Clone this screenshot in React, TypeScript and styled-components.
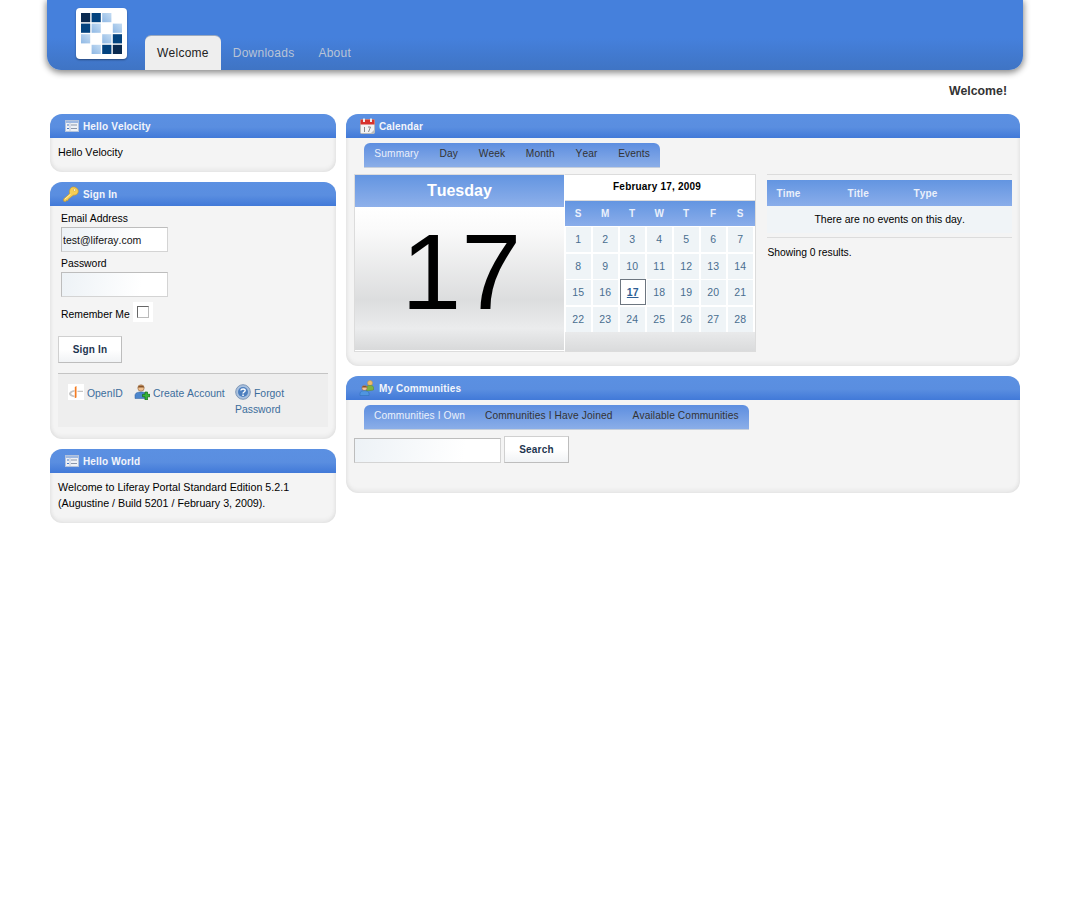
import React from "react";
import styled, { createGlobalStyle } from "styled-components";

const GlobalStyle = createGlobalStyle`
  html, body {
    margin: 0;
    padding: 0;
    background: #fff;
    font-family: "Liberation Sans", Arial, sans-serif;
    font-size: 11px;
    font-kerning: none;
    color: #000;
  }
  * { box-sizing: border-box; }
`;

const Page = styled.div`
  width: 1072px;
  min-height: 910px;
  padding: 0 49px 0 47px;
`;

const Banner = styled.header`
  height: 70px;
  padding-left: 29px;
  display: flex;
  background: linear-gradient(to bottom, #4580dc 0, #4580dc 38px, #3f74c4 70px);
  border-radius: 0 0 14px 14px;
  box-shadow: 0 2px 6px 1px rgba(0, 0, 0, 0.45);
`;

const LogoBox = styled.div`
  width: 51px;
  height: 51px;
  margin-top: 8px;
  background: #fff;
  border-radius: 4px;
  box-shadow: 0 1px 2px rgba(0, 0, 0, 0.4);
`;

const MainNav = styled.nav`
  display: flex;
  align-self: flex-end;
  margin-left: 18px;
`;

const NavTab = styled.a<{ $active?: boolean }>`
  height: 34px;
  line-height: 34px;
  padding: 0 12px;
  font-size: 12px;
  letter-spacing: 0.25px;
  border-radius: 6px 6px 0 0;
  color: ${(p) => (p.$active ? "#222" : "#b9c4d6")};
  background: ${(p) => (p.$active ? "#eee" : "transparent")};
  box-shadow: ${(p) => (p.$active ? "0 -1px 0 #9aa9bf" : "none")};
`;

const Greeting = styled.div`
  height: 44px;
  padding: 14px 16px 0 0;
  text-align: right;
  font-size: 12.3px;
  font-weight: bold;
  color: #333;
`;

const Columns = styled.main`
  display: grid;
  grid-template-columns: 286px 674px;
  gap: 10px;
  padding: 0 3px;
  align-items: start;
`;

const Column = styled.div`
  display: flex;
  flex-direction: column;
  gap: 10px;
`;

const Portlet = styled.section<{ $height: number }>`
  height: ${(p) => p.$height}px;
  background: #f4f4f4;
  border-radius: 12px;
  overflow: hidden;
  box-shadow: inset 0 -3px 4px rgba(0, 0, 0, 0.05), inset 3px 0 4px -2px rgba(0, 0, 0, 0.05),
    inset -3px 0 4px -2px rgba(0, 0, 0, 0.05);
`;

const PortletHead = styled.h2`
  display: flex;
  align-items: center;
  height: 24px;
  margin: 0;
  padding-left: 14px;
  gap: 4px;
  font-size: 10px;
  font-weight: bold;
  letter-spacing: 0.15px;
  color: #f2f5fb;
  background: linear-gradient(to bottom, #5b90e2 0, #5a8ee0 55%, #4179d8 100%);
`;

const IconSlot = styled.span`
  display: flex;
  width: 15px;
  height: 16px;
  align-items: center;
  justify-content: center;
`;

const PortletText = styled.p`
  margin: 0;
  padding: 6px 8px;
  font-size: 10.7px;
  line-height: 16px;
`;

const SignInForm = styled.form`
  padding: 5px 8px 0;
  font-size: 10.4px;
`;

const Field = styled.div`
  padding-left: 3px;
  margin-bottom: 4px;
`;

const FieldLabel = styled.label`
  display: block;
  height: 16px;
  line-height: 15px;
`;

const TextInput = styled.input<{ $width: number }>`
  display: block;
  width: ${(p) => p.$width}px;
  height: 25px;
  padding: 0 1px;
  font: 10.5px "Liberation Sans", Arial, sans-serif;
  font-kerning: none;
  color: #111;
  border: 1px solid #d4d4d4;
  border-top-color: #bdbdbd;
  border-left-color: #bdbdbd;
  border-radius: 0;
  outline: none;
  background: linear-gradient(100deg, #edf2f6 0, #fff 75%);
`;

const RememberRow = styled.div`
  display: flex;
  align-items: center;
  height: 20px;
  padding: 5px 0 0 3px;
  gap: 3px;
  margin-top: 5px;
`;

const CheckFrame = styled.span`
  display: flex;
  align-items: center;
  justify-content: center;
  width: 20px;
  height: 20px;
  margin-top: -5px;
  background: #fff;
`;

const CheckBox = styled.input`
  appearance: none;
  width: 12px;
  height: 12px;
  margin: 0;
  background: #fff;
  border: 1px solid #666;
  border-right-color: #bbb;
  border-bottom-color: #bbb;
`;

const Button = styled.button<{ $width: number }>`
  width: ${(p) => p.$width}px;
  height: 27px;
  padding: 0;
  font: bold 10px "Liberation Sans", Arial, sans-serif;
  letter-spacing: 0.2px;
  color: #1d3550;
  border: 1px solid #d0d0d0;
  border-right-color: #bdbdbd;
  border-bottom-color: #bdbdbd;
  border-radius: 0;
  background: linear-gradient(to bottom, #fff 0, #fff 50%, #f1f3f5 100%);
`;

const SignInButton = styled(Button)`
  display: block;
  margin-top: 14px;
`;

const FormLinks = styled.div`
  display: grid;
  grid-template-columns: 66px 101px 70px;
  height: 54px;
  margin-top: 10px;
  padding: 10px 0 0 10px;
  border-top: 1px solid #c4c4c4;
  background: #eee;
  line-height: 16px;
`;

const FormLink = styled.a`
  color: #3c6d9c;
`;

const LinkIcon = styled.svg`
  width: 16px;
  height: 16px;
  margin-right: 3px;
  vertical-align: -3px;
`;

const SubTabs = styled.div`
  display: inline-flex;
  height: 25px;
  margin: 5px 0 0 18px;
  border-radius: 6px 6px 0 0;
  border-bottom: 1px solid #c6cfdc;
  background: linear-gradient(to bottom, #5d8ee0 0, #8baee8 100%);
`;

const SubTab = styled.a<{ $active?: boolean; $gap: number }>`
  padding: 0 ${(p) => p.$gap}px;
  line-height: 22px;
  font-size: 10.2px;
  letter-spacing: 0.12px;
  color: ${(p) => (p.$active ? "#eaf0fb" : "#333")};
`;

const CalendarRow = styled.div`
  display: flex;
  padding: 6px 8px 0;
`;

const DayCard = styled.div`
  width: 211px;
  height: 178px;
  display: flex;
  flex-direction: column;
  border: 1px solid #dcdcdc;
  border-right: 1px solid #fff;
  background: #fff;
`;

const DayName = styled.div`
  height: 32px;
  line-height: 31px;
  text-align: center;
  font-size: 16px;
  font-weight: bold;
  color: #fff;
  background: linear-gradient(to bottom, #6395e1 0, #8eb0ea 100%);
`;

const DayNumber = styled.div`
  flex: 1;
  margin-bottom: 1px;
  padding: 11px 0 0 4px;
  text-align: center;
  font-size: 108px;
  line-height: 108px;
  background: linear-gradient(
    to bottom,
    #fff 0,
    #fafafa 16%,
    #dcddde 65%,
    #ebeced 85%,
    #d8d9da 100%
  );
`;

const MiniCalendar = styled.div`
  width: 192px;
  height: 178px;
  border: 1px solid #dcdcdc;
  border-left: 0;
  background: linear-gradient(to bottom, #fff 0, #fff 157px, #e9eaeb 157px, #dadbdc 100%);
`;

const MonthTitle = styled.div`
  height: 26px;
  padding-right: 6px;
  line-height: 24px;
  text-align: center;
  font-size: 10px;
  font-weight: bold;
  letter-spacing: 0.2px;
  border-bottom: 1px solid #dcdcdc;
`;

const WeekHead = styled.div`
  display: grid;
  grid-template-columns: repeat(7, 25px);
  column-gap: 2px;
  height: 25px;
  padding-left: 1px;
  background: linear-gradient(to bottom, #6395e1 0, #8aadea 100%);
`;

const WeekDay = styled.div`
  line-height: 25px;
  text-align: center;
  font-size: 10px;
  font-weight: bold;
  color: #eaf0fb;
`;

const DateGrid = styled.div`
  display: grid;
  grid-template-columns: repeat(7, 25px);
  grid-auto-rows: 25px;
  gap: 1.7px 2px;
  padding: 1px 0 0 1px;
`;

const DateCell = styled.a<{ $today?: boolean }>`
  text-align: center;
  font-size: 10.5px;
  line-height: 25px;
  color: ${(p) => (p.$today ? "#2f5f95" : "#4a6e90")};
  font-weight: ${(p) => (p.$today ? "bold" : "normal")};
  text-decoration: ${(p) => (p.$today ? "underline" : "none")};
  background: ${(p) => (p.$today ? "#fff" : "#eff4f7")};
  border: ${(p) => (p.$today ? "1px solid #6d7680" : "0")};
  margin: ${(p) => (p.$today ? "-1px -1px 0 0" : "0")};
`;

const EventsPane = styled.div`
  width: 245px;
  margin-left: 11px;
  font-size: 10.5px;
`;

const EventsHead = styled.div`
  display: grid;
  grid-template-columns: 71px 66px 1fr;
  height: 26px;
  margin-top: 5px;
  padding-left: 9px;
  line-height: 27px;
  font-size: 10px;
  font-weight: bold;
  letter-spacing: 0.2px;
  color: #eaf0fb;
  background: linear-gradient(to bottom, #6395e1 0, #8aadea 100%);
`;

const TopRule = styled.div`
  height: 1px;
  background: #dcdcdc;
`;

const EmptyRow = styled.div`
  height: 27px;
  line-height: 27px;
  text-align: center;
  background: #f0f4f7;
`;

const BottomRule = styled(TopRule)`
  margin-top: 4px;
`;

const Results = styled.div`
  margin-top: 8px;
  font-size: 10.3px;
  line-height: 14px;
`;

const SearchRow = styled.form`
  display: flex;
  align-items: flex-end;
  gap: 3px;
  padding: 6px 0 0 8px;
`;

const PortletIcon = () => (
  <svg width="14" height="12" viewBox="0 0 14 12">
    <rect x="0.5" y="0.5" width="13" height="11" fill="#eef1f6" stroke="#b4c3dc" />
    <rect x="1" y="1" width="12" height="2" fill="#9db8e2" />
    <path d="M2 5h2M2 8.5h2" stroke="#4a78c4" />
    <path d="M6 5h6M6 8.5h6" stroke="#8b97ab" />
    <path d="M5 3v8" stroke="#c3ccdb" />
  </svg>
);

const KeyIcon = () => (
  <svg width="17" height="16" viewBox="0 0 17 16" style={{ marginLeft: -1 }}>
    <path
      d="M10.500 0.500c3-.3 5.800 2 5.800 4.500 0 2.700-2.600 4.700-5.300 4.300L5.500 13.500l-.3 1.500-1.800-.1-.3 1-2.300-.2-.3-2.400L7 7.700C6.200 4.200 7.800.8 10.500.5z"
      fill="#f5ce55"
      stroke="#c8992c"
      strokeWidth="0.7"
    />
    <path d="M2 13.500l6-5.200" stroke="#fff3b8" strokeWidth="1" />
    <circle cx="12.300" cy="3.800" r="1.300" fill="#fff6cf" stroke="#c8992c" strokeWidth="0.5" />
  </svg>
);

const CalendarIcon = () => (
  <svg width="15" height="16" viewBox="0 0 15 16">
    <rect x="0.500" y="1.500" width="14" height="14" rx="1" fill="#f3f3f3" stroke="#bbb" />
    <rect x="0.500" y="1.500" width="14" height="5" fill="#d8322c" />
    <rect x="3" y="0.500" width="2" height="3.500" fill="#eee" />
    <rect x="10" y="0.500" width="2" height="3.500" fill="#eee" />
    <path d="M4.500 9v5M8 9h2.500L8.500 14" stroke="#888" fill="none" />
    <path d="M11 15l3.500-3.500v3.500z" fill="#bdbdbd" />
  </svg>
);

const PeopleIcon = () => (
  <svg width="16" height="16" viewBox="0 0 16 16" style={{ marginLeft: -1 }}>
    <circle cx="11" cy="3" r="2.500" fill="#eebd6d" stroke="#c58f3c" strokeWidth="0.5" />
    <path d="M7.500 11V7.500C7.500 6 9 5.500 11 5.500s3.500.5 3.500 2V10z" fill="#7cb342" stroke="#5b8a2b" strokeWidth="0.5" />
    <circle cx="5.500" cy="8" r="2.600" fill="#f2c29a" stroke="#8a5a2b" strokeWidth="0.5" />
    <path d="M3 7.500c.3-1.800 4.500-2 5 0z" fill="#8a4f24" />
    <path d="M1 15.500v-2c0-2 2-2.800 4.500-2.800S10 11.500 10 13.500v2z" fill="#4f95e0" stroke="#2d6db5" strokeWidth="0.5" />
  </svg>
);

const OpenIdIcon = () => (
  <LinkIcon viewBox="0 0 16 16">
    <rect width="16" height="16" fill="#fff" />
    <path d="M6.500 6C3.500 6.500 1 7.800 1 9.800c0 1.800 2.300 3.200 5.500 3.500v-1.800C4.500 11.200 3.200 10.600 3.200 9.700S4.500 8.100 6.500 7.700z" fill="#c4c4c4" />
    <path d="M6.800 3l1.700-.9v11.400l-1.700.8z" fill="#f47b20" />
    <path d="M9.500 6.800h5.500v1.200H9.500z" fill="#c4c4c4" />
  </LinkIcon>
);

const CreateAccountIcon = () => (
  <LinkIcon viewBox="0 0 16 16">
    <circle cx="7" cy="4" r="3.200" fill="#f0c08f" stroke="#7c5128" strokeWidth="0.5" />
    <path d="M3.800 3.500C4 .8 10 .6 10.300 3.500z" fill="#84522a" />
    <path d="M1 14.500v-3c0-2.500 2.500-3.500 6-3.500 2 0 3.500.3 4.500 1v5.500z" fill="#4c86cc" stroke="#2f5f9b" strokeWidth="0.5" />
    <path d="M11 8h2.500v2.300H16v2.500h-2.500V16H11v-3.200H8.500v-2.500H11z" fill="#36b336" stroke="#146c14" strokeWidth="0.7" />
  </LinkIcon>
);

const HelpIcon = () => (
  <LinkIcon viewBox="0 0 16 16">
    <circle cx="8" cy="8" r="7.300" fill="#a9c1df" stroke="#7f97b6" />
    <circle cx="8" cy="8" r="5" fill="#4d7fbf" />
    <path d="M5.800 6.500C6 4.400 10.200 4.400 10.200 6.500 10.200 8 8 8 8 9.500" fill="none" stroke="#fff" strokeWidth="1.400" />
    <rect x="7.300" y="10.500" width="1.500" height="1.500" fill="#fff" />
  </LinkIcon>
);

const logoShades = [
  ["#0a2a50", "#03437f", "url(#logoLight)", ""],
  ["#03437f", "url(#logoLight)", "", "url(#logoLight)"],
  ["url(#logoLight)", "", "url(#logoLight)", "#03437f"],
  ["", "url(#logoLight)", "#03437f", "#0a2a50"],
];

const Logo = () => (
  <LogoBox>
    <svg width="51" height="51" viewBox="0 0 51 51">
      <defs>
        <linearGradient id="logoLight" x1="0" y1="1" x2="1" y2="0">
          <stop offset="0" stopColor="#8fb8e4" />
          <stop offset="1" stopColor="#c4dcf3" />
        </linearGradient>
      </defs>
      {logoShades.map((row, y) =>
        row.map((shade, x) =>
          shade ? (
            <rect key={`${x}-${y}`} x={5 + x * 10.6} y={5 + y * 10.6} width="9.2" height="9.2" fill={shade} />
          ) : null
        )
      )}
    </svg>
  </LogoBox>
);

const weekDays = ["S", "M", "T", "W", "T", "F", "S"];
const dates = Array.from({ length: 28 }, (_, i) => i + 1);

const App = () => {
  return (
    <Page>
      <GlobalStyle />
      <Banner>
        <Logo />
        <MainNav>
          <NavTab $active>Welcome</NavTab>
          <NavTab>Downloads</NavTab>
          <NavTab>About</NavTab>
        </MainNav>
      </Banner>
      <Greeting>Welcome!</Greeting>
      <Columns>
        <Column>
          <Portlet $height={58}>
            <PortletHead>
              <IconSlot>
                <PortletIcon />
              </IconSlot>
              Hello Velocity
            </PortletHead>
            <PortletText>Hello Velocity</PortletText>
          </Portlet>
          <Portlet $height={257}>
            <PortletHead>
              <IconSlot>
                <KeyIcon />
              </IconSlot>
              Sign In
            </PortletHead>
            <SignInForm>
              <Field>
                <FieldLabel>Email Address</FieldLabel>
                <TextInput $width={107} defaultValue="test@liferay.com" />
              </Field>
              <Field>
                <FieldLabel>Password</FieldLabel>
                <TextInput $width={107} type="password" />
              </Field>
              <RememberRow>
                Remember Me
                <CheckFrame>
                  <CheckBox type="checkbox" />
                </CheckFrame>
              </RememberRow>
              <SignInButton type="button" $width={64}>
                Sign In
              </SignInButton>
              <FormLinks>
                <div>
                  <OpenIdIcon />
                  <FormLink>OpenID</FormLink>
                </div>
                <div>
                  <CreateAccountIcon />
                  <FormLink>Create Account</FormLink>
                </div>
                <div>
                  <HelpIcon />
                  <FormLink>Forgot Password</FormLink>
                </div>
              </FormLinks>
            </SignInForm>
          </Portlet>
          <Portlet $height={74}>
            <PortletHead>
              <IconSlot>
                <PortletIcon />
              </IconSlot>
              Hello World
            </PortletHead>
            <PortletText>
              Welcome to Liferay Portal Standard Edition 5.2.1
              <br />
              (Augustine / Build 5201 / February 3, 2009).
            </PortletText>
          </Portlet>
        </Column>
        <Column>
          <Portlet $height={252}>
            <PortletHead>
              <IconSlot>
                <CalendarIcon />
              </IconSlot>
              Calendar
            </PortletHead>
            <SubTabs>
              <SubTab $active $gap={10.35}>Summary</SubTab>
              <SubTab $gap={10.35}>Day</SubTab>
              <SubTab $gap={10.35}>Week</SubTab>
              <SubTab $gap={10.35}>Month</SubTab>
              <SubTab $gap={10.35}>Year</SubTab>
              <SubTab $gap={10.35}>Events</SubTab>
            </SubTabs>
            <CalendarRow>
              <DayCard>
                <DayName>Tuesday</DayName>
                <DayNumber>17</DayNumber>
              </DayCard>
              <MiniCalendar>
                <MonthTitle>February 17, 2009</MonthTitle>
                <WeekHead>
                  {weekDays.map((d, i) => (
                    <WeekDay key={i}>{d}</WeekDay>
                  ))}
                </WeekHead>
                <DateGrid>
                  {dates.map((d) => (
                    <DateCell key={d} $today={d === 17}>
                      {d}
                    </DateCell>
                  ))}
                </DateGrid>
              </MiniCalendar>
              <EventsPane>
                <TopRule />
                <EventsHead>
                  <span>Time</span>
                  <span>Title</span>
                  <span>Type</span>
                </EventsHead>
                <EmptyRow>There are no events on this day.</EmptyRow>
                <BottomRule />
                <Results>Showing 0 results.</Results>
              </EventsPane>
            </CalendarRow>
          </Portlet>
          <Portlet $height={117}>
            <PortletHead>
              <IconSlot>
                <PeopleIcon />
              </IconSlot>
              My Communities
            </PortletHead>
            <SubTabs>
              <SubTab $active $gap={10}>Communities I Own</SubTab>
              <SubTab $gap={10}>Communities I Have Joined</SubTab>
              <SubTab $gap={10}>Available Communities</SubTab>
            </SubTabs>
            <SearchRow>
              <TextInput $width={147} />
              <Button type="button" $width={65}>
                Search
              </Button>
            </SearchRow>
          </Portlet>
        </Column>
      </Columns>
    </Page>
  );
};

export default App;
